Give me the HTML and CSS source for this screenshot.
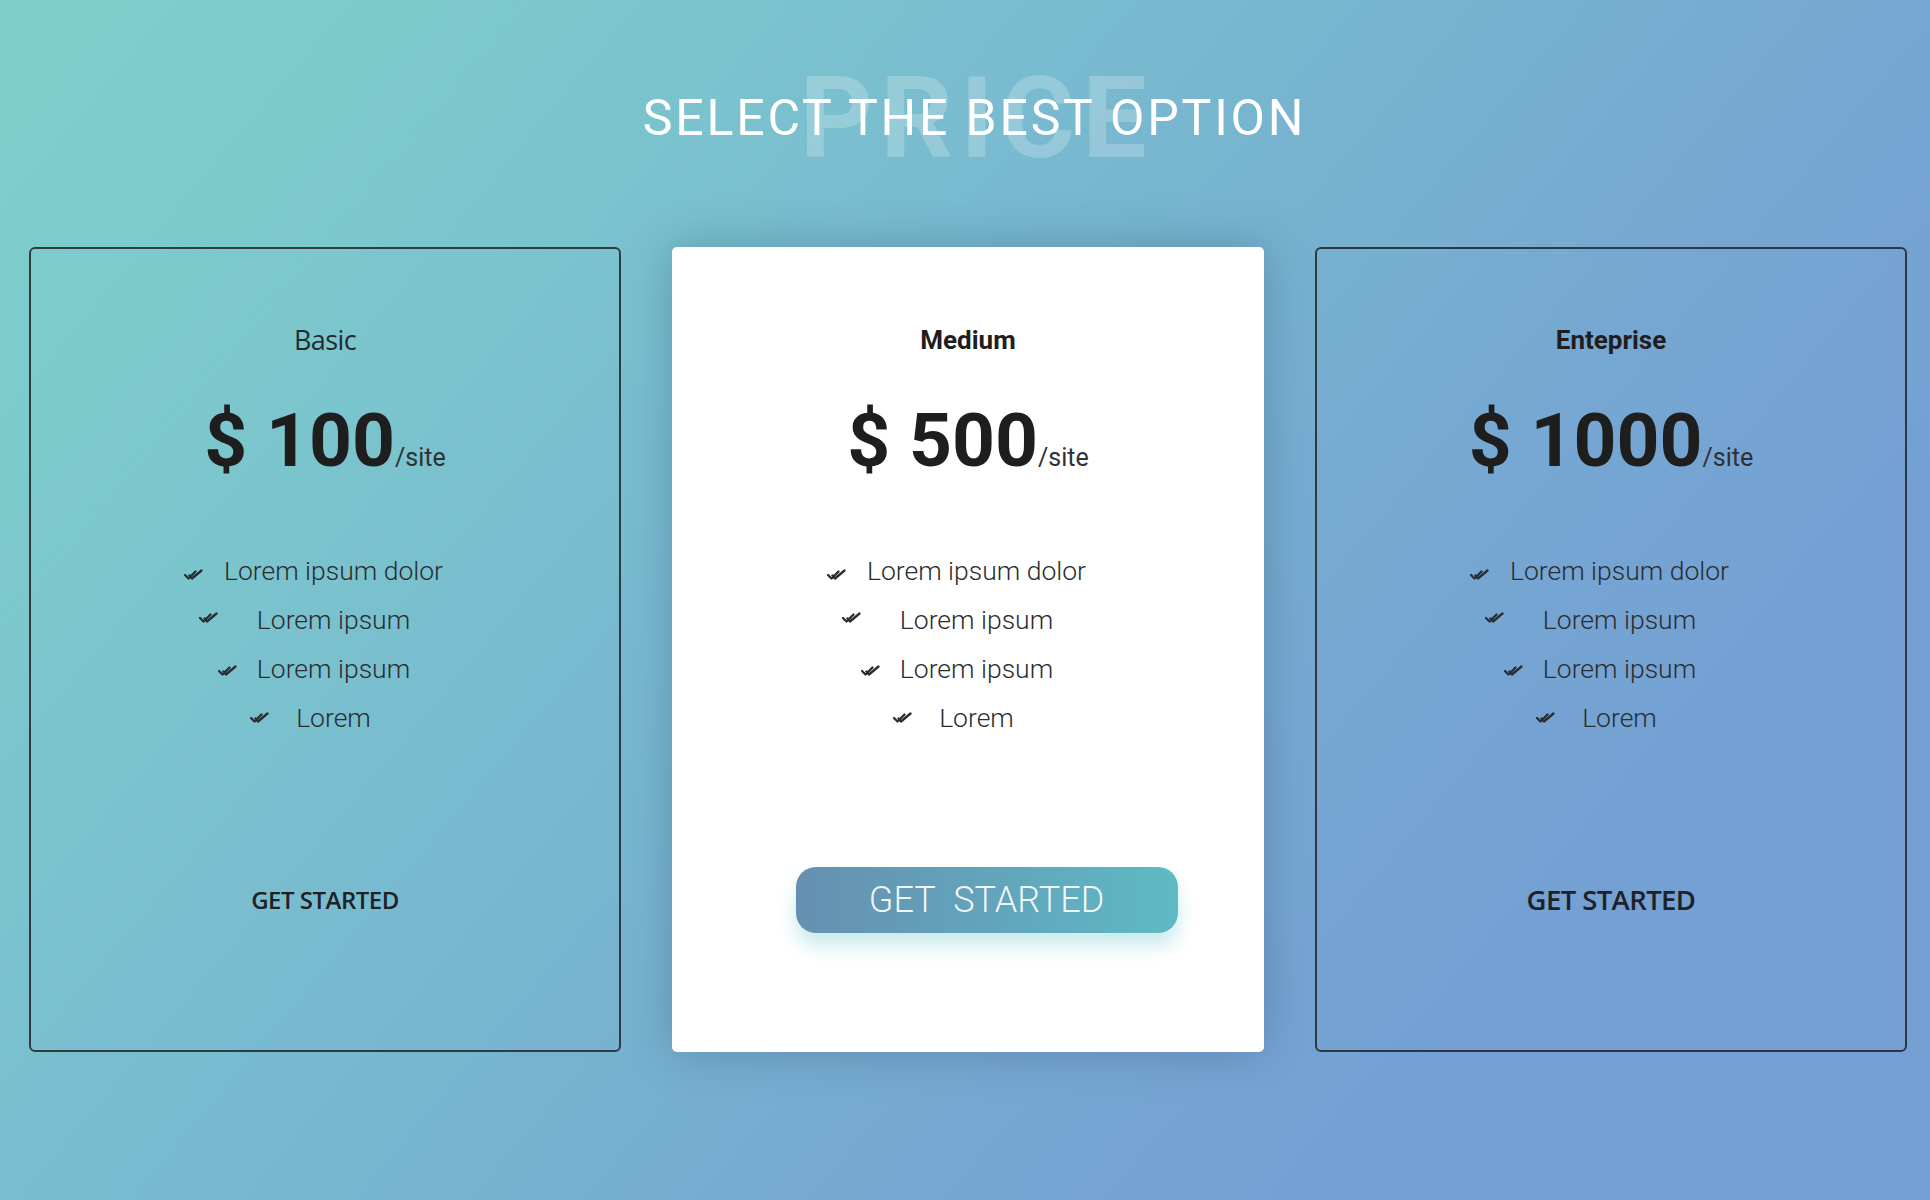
FILE: index.html
```html
<!DOCTYPE html>
<html lang="en">
<head>
<meta charset="utf-8">
<title>Pricing</title>
<link rel="stylesheet" href="styles.css">
</head>
<body>
<main class="page">
  <header class="hero">
    <span class="hero-bg">PRICE</span>
    <h1 class="hero-title">SELECT THE BEST OPTION</h1>
  </header>

  <section class="plans">
    <article class="plan plan--outline">
      <h2 class="plan-name plan-name--soft">Basic</h2>
      <p class="plan-price"><span class="amount">$ 100</span><span class="unit">/site</span></p>
      <ul class="features">
        <li><svg class="check" viewBox="0 0 20 11" width="20" height="11"><path d="M1 6 L4.5 9.5 L11.5 2.5 M5.5 6.5 L8 9.5 L17.5 1.5"/></svg><span class="feat">Lorem ipsum dolor</span></li>
        <li><svg class="check" viewBox="0 0 20 11" width="20" height="11"><path d="M1 6 L4.5 9.5 L11.5 2.5 M5.5 6.5 L8 9.5 L17.5 1.5"/></svg><span class="feat">Lorem ipsum</span></li>
        <li><svg class="check" viewBox="0 0 20 11" width="20" height="11"><path d="M1 6 L4.5 9.5 L11.5 2.5 M5.5 6.5 L8 9.5 L17.5 1.5"/></svg><span class="feat">Lorem ipsum</span></li>
        <li><svg class="check" viewBox="0 0 20 11" width="20" height="11"><path d="M1 6 L4.5 9.5 L11.5 2.5 M5.5 6.5 L8 9.5 L17.5 1.5"/></svg><span class="feat">Lorem</span></li>
      </ul>
      <div class="plan-action"><a class="link-cta">GET STARTED</a></div>
    </article>

    <article class="plan plan--featured">
      <h2 class="plan-name">Medium</h2>
      <p class="plan-price"><span class="amount">$ 500</span><span class="unit">/site</span></p>
      <ul class="features">
        <li><svg class="check" viewBox="0 0 20 11" width="20" height="11"><path d="M1 6 L4.5 9.5 L11.5 2.5 M5.5 6.5 L8 9.5 L17.5 1.5"/></svg><span class="feat">Lorem ipsum dolor</span></li>
        <li><svg class="check" viewBox="0 0 20 11" width="20" height="11"><path d="M1 6 L4.5 9.5 L11.5 2.5 M5.5 6.5 L8 9.5 L17.5 1.5"/></svg><span class="feat">Lorem ipsum</span></li>
        <li><svg class="check" viewBox="0 0 20 11" width="20" height="11"><path d="M1 6 L4.5 9.5 L11.5 2.5 M5.5 6.5 L8 9.5 L17.5 1.5"/></svg><span class="feat">Lorem ipsum</span></li>
        <li><svg class="check" viewBox="0 0 20 11" width="20" height="11"><path d="M1 6 L4.5 9.5 L11.5 2.5 M5.5 6.5 L8 9.5 L17.5 1.5"/></svg><span class="feat">Lorem</span></li>
      </ul>
      <div class="plan-action"><a class="btn-cta">GET&nbsp; STARTED</a></div>
    </article>

    <article class="plan plan--outline">
      <h2 class="plan-name">Enteprise</h2>
      <p class="plan-price"><span class="amount">$ 1000</span><span class="unit">/site</span></p>
      <ul class="features">
        <li><svg class="check" viewBox="0 0 20 11" width="20" height="11"><path d="M1 6 L4.5 9.5 L11.5 2.5 M5.5 6.5 L8 9.5 L17.5 1.5"/></svg><span class="feat">Lorem ipsum dolor</span></li>
        <li><svg class="check" viewBox="0 0 20 11" width="20" height="11"><path d="M1 6 L4.5 9.5 L11.5 2.5 M5.5 6.5 L8 9.5 L17.5 1.5"/></svg><span class="feat">Lorem ipsum</span></li>
        <li><svg class="check" viewBox="0 0 20 11" width="20" height="11"><path d="M1 6 L4.5 9.5 L11.5 2.5 M5.5 6.5 L8 9.5 L17.5 1.5"/></svg><span class="feat">Lorem ipsum</span></li>
        <li><svg class="check" viewBox="0 0 20 11" width="20" height="11"><path d="M1 6 L4.5 9.5 L11.5 2.5 M5.5 6.5 L8 9.5 L17.5 1.5"/></svg><span class="feat">Lorem</span></li>
      </ul>
      <div class="plan-action"><a class="link-cta link-cta--large">GET STARTED</a></div>
    </article>
  </section>
</main>
</body>
</html>
```

FILE: styles.css
```css
html, body {
  margin: 0;
  padding: 0;
}

body {
  width: 1930px;
  height: 1200px;
  overflow: hidden;
  font-family: Roboto, "Liberation Sans", sans-serif;
  background: linear-gradient(130deg, #7fd0cc 0%, #7bc6cd 22%, #79bccf 36%, #77b2d0 50%, #76a8d2 64%, #74a0d4 80%, #75a0d5 100%);
}

.page {
  display: flex;
  flex-direction: column;
}

/* ---------- hero ---------- */
.hero {
  height: 236px;
  display: grid;
  place-items: center;
  padding-left: 16px;
}

.hero-bg,
.hero-title {
  grid-area: 1 / 1;
  line-height: 1;
  white-space: nowrap;
}

.hero-bg {
  font-family: Roboto, sans-serif;
  font-weight: 700;
  font-size: 114px;
  letter-spacing: 7px;
  padding-left: 7px;
  color: rgba(255, 255, 255, 0.22);
}

.hero-title {
  margin: 0;
  font-family: Roboto, sans-serif;
  font-weight: 400;
  font-size: 50px;
  letter-spacing: 2.8px;
  padding-left: 3px;
  color: #ffffff;
}

/* ---------- plans ---------- */
.plans {
  display: grid;
  grid-template-columns: repeat(3, 592px);
  column-gap: 51px;
  padding-left: 29px;
  margin-top: 11px;
}

.plan {
  box-sizing: border-box;
  height: 805px;
  border-radius: 6px;
  border: 2px solid transparent;
  padding-top: 76px;
  display: flex;
  flex-direction: column;
}

.plan--outline {
  border-color: rgba(40, 44, 48, 0.9);
}

.plan--featured {
  background: #ffffff;
  border-radius: 5px;
  box-shadow: 0 0 45px rgba(45, 80, 110, 0.35);
}

.plan-name {
  margin: 0;
  height: 30px;
  line-height: 30px;
  text-align: center;
  font-family: Roboto, sans-serif;
  font-weight: 700;
  font-size: 26px;
  color: #1e1e1e;
}

.plan-name--soft {
  font-family: "Open Sans", sans-serif;
  font-weight: 400;
  font-size: 27px;
  letter-spacing: -0.6px;
  color: #262a2c;
}

.plan-price {
  margin: 45px 0 0;
  height: 80px;
  line-height: 80px;
  text-align: center;
  color: #1e1e1e;
  white-space: nowrap;
}

.amount {
  font-family: Roboto, sans-serif;
  font-weight: 700;
  font-size: 75px;
}

.unit {
  font-family: Roboto, sans-serif;
  font-weight: 400;
  font-size: 25px;
  color: #2e3133;
}

/* ---------- features ---------- */
.features {
  list-style: none;
  margin: 66px 0 0;
  padding: 0 0 0 17px;
}

.features li {
  display: grid;
  grid-template-columns: 1fr auto 1fr;
  height: 49px;
  line-height: 49px;
}

.check {
  grid-column: 1;
  justify-self: end;
  align-self: end;
  width: 20px;
  height: 11px;
  fill: none;
  stroke: #2a2d2f;
  stroke-width: 2.3;
  stroke-linecap: round;
  stroke-linejoin: round;
}

.feat {
  grid-column: 2;
  font-family: Roboto, sans-serif;
  font-weight: 300;
  font-size: 26.5px;
  color: #2a2d2f;
  white-space: nowrap;
}

.features li:nth-child(1) .check { margin: 0 20px 15px 0; }
.features li:nth-child(2) .check { margin: 0 38px 21px 0; }
.features li:nth-child(3) .check { margin: 0 19px 17px 0; }
.features li:nth-child(4) .check { margin: 0 26px 19px 0; }

/* ---------- actions ---------- */
.plan-action {
  margin-top: 125px;
  height: 66px;
  display: flex;
  justify-content: center;
  align-items: center;
}

.link-cta {
  font-family: "Open Sans", sans-serif;
  font-weight: 600;
  font-size: 24px;
  line-height: 30px;
  letter-spacing: -0.5px;
  color: #1f2224;
}

.link-cta--large {
  font-size: 27.5px;
  letter-spacing: -0.6px;
}

.btn-cta {
  box-sizing: border-box;
  width: 382px;
  height: 66px;
  margin-left: 37px;
  border-radius: 20px;
  display: flex;
  justify-content: center;
  align-items: center;
  background: linear-gradient(90deg, #6690b1 0%, #62a6bc 55%, #5ebac4 100%);
  box-shadow: 0 13px 18px rgba(92, 190, 200, 0.32);
  font-family: Roboto, sans-serif;
  font-weight: 300;
  font-size: 36px;
  letter-spacing: 0;
  color: rgba(255, 255, 255, 0.92);
}
```
